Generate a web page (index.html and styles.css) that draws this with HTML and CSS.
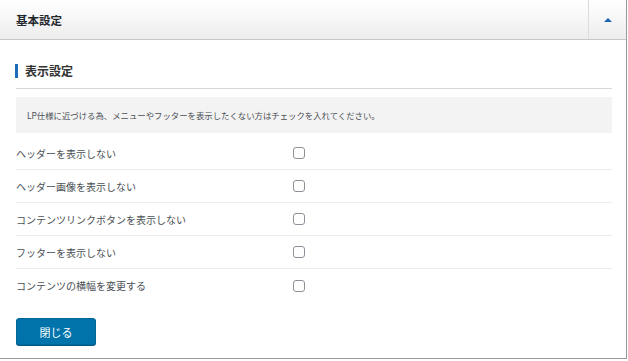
FILE: index.html
```html
<!DOCTYPE html>
<html lang="ja">
<head>
  <meta charset="UTF-8" />
  <meta name="viewport" content="width=device-width, initial-scale=1.0" />
  <title>基本設定</title>
  <link rel="stylesheet" href="styles.css">
</head>
<body>
  <div class="panel">
    <div class="panel-head">
      <div class="panel-title">基本設定</div>
      <button class="toggle" type="button" aria-label="閉じる"><span class="arrow"></span></button>
    </div>
    <div class="panel-body">
      <h3 class="section-title">表示設定</h3>
      <p class="notice">LP仕様に近づける為、メニューやフッターを表示したくない方はチェックを入れてください。</p>
      <div class="rows">
        <label class="row"><span class="label">ヘッダーを表示しない</span><input type="checkbox" class="check"></label>
        <label class="row"><span class="label">ヘッダー画像を表示しない</span><input type="checkbox" class="check"></label>
        <label class="row"><span class="label">コンテンツリンクボタンを表示しない</span><input type="checkbox" class="check"></label>
        <label class="row"><span class="label">フッターを表示しない</span><input type="checkbox" class="check"></label>
        <label class="row"><span class="label">コンテンツの横幅を変更する</span><input type="checkbox" class="check"></label>
      </div>
      <button type="button" class="btn">閉じる</button>
    </div>
  </div>
</body>
</html>
```

FILE: styles.css
```css
:root {
  --blue: #0073aa;
  --text: #4a4f55;
  --line: #ececec;
}
* { box-sizing: border-box; }
html, body {
  margin: 0; padding: 0;
  font-family: "Noto Sans CJK JP", "Noto Sans", sans-serif;
  background: #fff;
  color: var(--text);
}
.panel {
  width: 627px; height: 359px;
  border-right: 1px solid #9a9a9a;
  border-bottom: 1px solid #9a9a9a;
  background: #fff;
}
.panel-head {
  height: 40px;
  display: flex; align-items: center;
  background: linear-gradient(#fff, #ededed);
  border-bottom: 1px solid #c8c8c8;
}
.panel-title {
  flex: 1;
  padding-left: 16px;
  font-size: 11.5px; font-weight: bold;
  color: #23282d;
}
.toggle {
  width: 38px; height: 39px;
  border: none; border-left: 1px solid #dcdcdc;
  background: transparent; padding: 0;
  display: flex; justify-content: center; align-items: center;
}
.arrow {
  width: 0; height: 0;
  border-left: 4px solid transparent;
  border-right: 4px solid transparent;
  border-bottom: 4px solid #1d63b0;
}
.panel-body {
  padding: 24px 14px 0 16px;
}
.section-title {
  margin: 0;
  padding: 0 0 10px 0;
  border-bottom: 1px solid #d6d6d6;
  font-size: 12px; font-weight: bold;
  color: #333;
  line-height: 14px;
  display: flex; align-items: center;
}
.section-title::before {
  content: "";
  width: 3px; height: 14px;
  background: #1d6ab8;
  margin: 0 7px 0 -1px;
}
.notice {
  margin: 8px 0 4px;
  height: 36px;
  padding: 0 11px;
  background: #f3f3f3;
  font-size: 8.4px;
  display: flex; align-items: center;
  color: var(--text);
}
.row {
  height: 33px;
  display: grid; grid-template-columns: 277px 1fr;
  align-items: center;
  border-bottom: 1px solid var(--line);
  font-size: 10px;
}
.row:last-child { border-bottom: none; }
.check {
  appearance: none;
  margin: 0;
  width: 12px; height: 12px;
  border: 1px solid #8c9298;
  border-radius: 3px;
  background: #fff;
}
.btn {
  margin-top: 16px;
  width: 80px; height: 27px;
  background: var(--blue);
  border: 1px solid #006799;
  border-radius: 3px;
  box-shadow: 0 1px 0 #005a87;
  color: #fff;
  font-family: inherit; font-size: 11px;
  cursor: pointer;
}
```
